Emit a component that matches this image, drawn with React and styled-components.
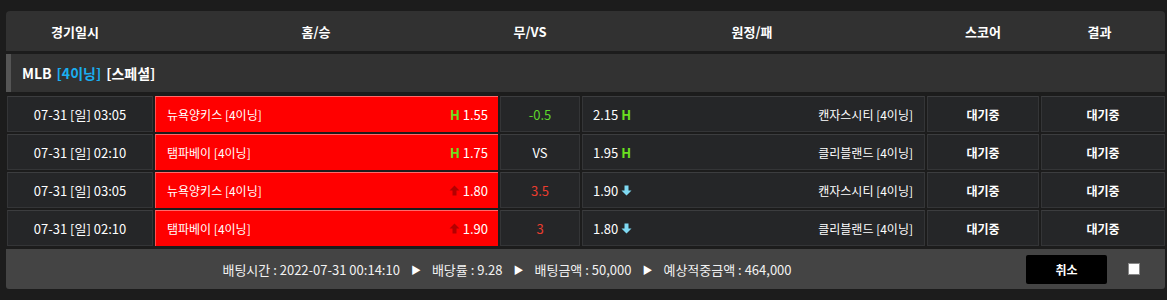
import styled, { createGlobalStyle } from "styled-components";

const GlobalStyle = createGlobalStyle`
    body{
        margin: 0;
        background-color: #1c1c1c;
        font-family: "Noto Sans CJK KR", "Noto Sans", sans-serif;
        color: #fff;
    }
`

const games = [
    { date: "07-31 [일] 03:05", home: "뉴욕양키스 [4이닝]", homeOdd: "1.55", mark: "H", draw: "-0.5", drawTone: "green", awayOdd: "2.15", awayMark: "H", away: "캔자스시티 [4이닝]" },
    { date: "07-31 [일] 02:10", home: "탬파베이 [4이닝]", homeOdd: "1.75", mark: "H", draw: "VS", drawTone: "white", awayOdd: "1.95", awayMark: "H", away: "클리블랜드 [4이닝]" },
    { date: "07-31 [일] 03:05", home: "뉴욕양키스 [4이닝]", homeOdd: "1.80", mark: "up", draw: "3.5", drawTone: "red", awayOdd: "1.90", awayMark: "down", away: "캔자스시티 [4이닝]" },
    { date: "07-31 [일] 02:10", home: "탬파베이 [4이닝]", homeOdd: "1.90", mark: "up", draw: "3", drawTone: "red", awayOdd: "1.80", awayMark: "down", away: "클리블랜드 [4이닝]" },
]

const Mark = ({type}) =>{
    if(type === "H") return <HMark>H</HMark>
    if(type === "up"){
        return(
            <svg width="11" height="11" viewBox="0 0 11 11">
                <path d="M5.5 0.5 L10.5 5.5 L7.5 5.5 L7.5 10.5 L3.5 10.5 L3.5 5.5 L0.5 5.5 Z" fill="#b30000"/>
            </svg>
        )
    }
    return(
        <svg width="11" height="11" viewBox="0 0 11 11">
            <path d="M5.5 10.5 L10.5 5.5 L7.5 5.5 L7.5 0.5 L3.5 0.5 L3.5 5.5 L0.5 5.5 Z" fill="#7fd9f2"/>
        </svg>
    )
}

const App = () =>{
    return(
        <Page>
            <GlobalStyle/>
            <Header>
                <span>경기일시</span>
                <span>홈/승</span>
                <span>무/VS</span>
                <span>원정/패</span>
                <span>스코어</span>
                <span>결과</span>
            </Header>
            <League>
                MLB <Blue>[4이닝]</Blue> [스페셜]
            </League>
            <Rows>
                {games.map((g, i) =>(
                    <Row key={i}>
                        <Cell className="num">{g.date}</Cell>
                        <HomeCell>
                            <span>{g.home}</span>
                            <Odd><Mark type={g.mark}/>{g.homeOdd}</Odd>
                        </HomeCell>
                        <Cell className="num"><DrawText tone={g.drawTone}>{g.draw}</DrawText></Cell>
                        <AwayCell>
                            <Odd>{g.awayOdd}<Mark type={g.awayMark}/></Odd>
                            <span>{g.away}</span>
                        </AwayCell>
                        <Cell className="bold">대기중</Cell>
                        <Cell className="bold">대기중</Cell>
                    </Row>
                ))}
            </Rows>
            <Footer>
                <Summary>
                    <span>배팅시간 : 2022-07-31 00:14:10</span>
                    <Arrow>▶</Arrow>
                    <span>배당률 : 9.28</span>
                    <Arrow>▶</Arrow>
                    <span>배팅금액 : 50,000</span>
                    <Arrow>▶</Arrow>
                    <span>예상적중금액 : 464,000</span>
                </Summary>
                <CancelButton>취소</CancelButton>
                <Check type="checkbox"/>
            </Footer>
        </Page>
    )
}

const Page = styled.div`
    width: 1159px;
    padding: 11px 2px 0 6px;
`
const Header = styled.div`
    display: grid;
    grid-template-columns: 138px 344px 84px 360px 102px 131px;
    height: 40px;
    align-items: center;
    background-color: #313131;
    border-radius: 4px 4px 0 0;
    span{
        text-align: center;
        font-size: 13px;
        font-weight: 700;
        color: #fff;
    }
`
const League = styled.div`
    margin-top: 3px;
    height: 38px;
    display: flex;
    align-items: center;
    gap: 5px;
    background-color: #323232;
    border-left: 5px solid #555;
    padding-left: 11px;
    font-size: 14px;
    font-weight: 700;
`
const Blue = styled.span`
    color: #1aaef0;
`
const Rows = styled.div`
    margin-top: 4px;
    padding-left: 1px;
    display: flex;
    flex-direction: column;
    gap: 2px;
`
const Row = styled.div`
    display: grid;
    grid-template-columns: 146px 343px 80px 343px 112px 124px;
    column-gap: 2px;
    height: 36px;
`
const Cell = styled.div`
    display: flex;
    align-items: center;
    justify-content: center;
    box-sizing: border-box;
    background-color: #252628;
    border: 1px solid #343537;
    border-top-color: #3c3d3f;
    font-size: 12px;
    color: #fff;
    &.bold{
        font-weight: 700;
    }
    &.num{
        font-size: 13px;
    }
`
const HomeCell = styled.div`
    display: flex;
    align-items: center;
    justify-content: space-between;
    box-sizing: border-box;
    padding: 0 10px 0 11px;
    background-color: #ff0000;
    border-top: 1px solid #ff6a6a;
    border-left: 1px solid #ff5050;
    font-size: 12px;
    color: #fff;
`
const AwayCell = styled(Cell)`
    justify-content: space-between;
    padding: 0 11px 0 10px;
`
const Odd = styled.span`
    display: flex;
    align-items: center;
    gap: 3px;
    font-size: 13px;
`
const HMark = styled.b`
    color: #6be020;
    font-size: 13px;
`
const DrawText = styled.span`
    color: ${p => p.tone === "green" ? "#5dd62c" : p.tone === "red" ? "#ea3d2f" : "#fff"};
`
const Footer = styled.div`
    margin-top: 3px;
    height: 40px;
    display: flex;
    align-items: center;
    background-color: #444;
    border-radius: 0 0 3px 3px;
`
const Summary = styled.div`
    flex: 1;
    display: flex;
    justify-content: center;
    align-items: center;
    gap: 11px;
    padding-right: 18px;
    font-size: 13px;
    color: #f2f2f2;
`
const Arrow = styled.span`
    font-size: 10px;
    color: #fff;
`
const CancelButton = styled.button`
    width: 81px;
    height: 29px;
    background-color: #000;
    border: none;
    border-radius: 2px;
    color: #fff;
    font-family: inherit;
    font-size: 12px;
    font-weight: 700;
`
const Check = styled.input`
    appearance: none;
    width: 12px;
    height: 12px;
    margin: 0 25px 0 21px;
    background-color: #fff;
    border: 1px solid #888;
    box-sizing: border-box;
`

export default App;
